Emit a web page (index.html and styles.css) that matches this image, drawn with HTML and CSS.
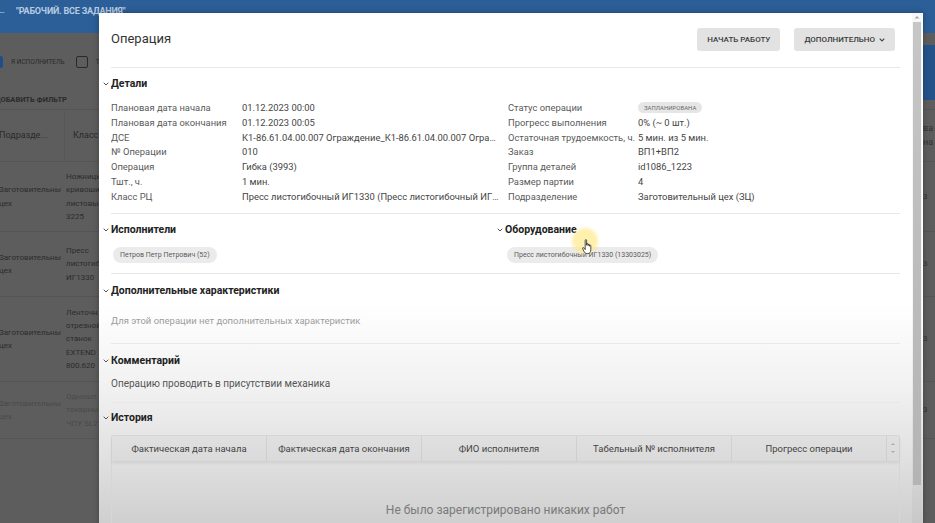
FILE: index.html
```html
<!DOCTYPE html>
<html lang="ru">
<head>
<meta charset="utf-8">
<title>Операция</title>
<link rel="stylesheet" href="styles.css">
</head>
<body>
<div class="app">
  <header class="appbar">
    <span class="back">←</span>
    <span class="apptitle">"РАБОЧИЙ. ВСЕ ЗАДАНИЯ"</span>
  </header>
  <div class="controls">
    <div class="controls-left">
      <div class="filters">
        <span class="cb cb-on"></span><span class="flabel">Я исполнитель</span>
        <span class="cb"></span><span class="flabel">Только мои</span>
      </div>
      <div class="addfilter">Добавить фильтр</div>
    </div>
    <div class="side-btn"></div>
  </div>
  <div class="bgtable">
    <div class="brow bhead"><span class="c1">Подразде...</span><span class="c2">Класс РЦ</span><span class="c3"></span><span class="c4">ва<br>на</span></div>
    <div class="brow"><span class="c1">Заготовительны<br>цех</span><span class="c2">Ножницы<br>кривошип<br>листовы<br>3225</span><span class="c3"></span><span class="c4">3</span></div>
    <div class="brow"><span class="c1">Заготовительны<br>цех</span><span class="c2">Пресс<br>листогиб<br>ИГ1330</span><span class="c3"></span><span class="c4">3</span></div>
    <div class="brow"><span class="c1">Заготовительны<br>цех</span><span class="c2">Ленточн<br>отрезной<br>станок<br>EXTEND<br>800.620</span><span class="c3"></span><span class="c4">3</span></div>
    <div class="brow faded"><span class="c1">Заготовительны<br>цех</span><span class="c2">Одношп<br>токарны<br>ЧПУ SL2</span><span class="c3"></span><span class="c4">3</span></div>
  </div>
</div>

<div class="modal">
  <div class="modal-body">
    <div class="mhead">
      <h1 class="mtitle">Операция</h1>
      <div class="mactions">
        <button class="btn">Начать работу</button>
        <button class="btn">Дополнительно <svg class="btn-chev" viewBox="0 0 6 4" width="6" height="4"><polyline points="0.7,0.7 3,3 5.3,0.7" fill="none" stroke="#444" stroke-width="1.1"/></svg></button>
      </div>
    </div>

    <section class="sec sec-details">
      <h2 class="sec-h"><svg class="chev" viewBox="0 0 6 4" width="6" height="4"><polyline points="0.7,0.7 3,3 5.3,0.7" fill="none" stroke="#555" stroke-width="1"/></svg>Детали</h2>
      <div class="kv">
        <span class="k">Плановая дата начала</span><span class="v">01.12.2023 00:00</span>
        <span class="k">Статус операции</span><span class="v"><span class="status">Запланирована</span></span>

        <span class="k">Плановая дата окончания</span><span class="v">01.12.2023 00:05</span>
        <span class="k">Прогресс выполнения</span><span class="v">0% (~ 0 шт.)</span>

        <span class="k">ДСЕ</span><span class="v">К1-86.61.04.00.007 Ограждение_К1-86.61.04.00.007 Ограждение</span>
        <span class="k">Остаточная трудоемкость, ч.</span><span class="v">5 мин. из 5 мин.</span>

        <span class="k">№ Операции</span><span class="v">010</span>
        <span class="k">Заказ</span><span class="v">ВП1+ВП2</span>

        <span class="k">Операция</span><span class="v">Гибка (3993)</span>
        <span class="k">Группа деталей</span><span class="v">id1086_1223</span>

        <span class="k">Тшт., ч.</span><span class="v">1 мин.</span>
        <span class="k">Размер партии</span><span class="v">4</span>

        <span class="k">Класс РЦ</span><span class="v">Пресс листогибочный ИГ1330 (Пресс листогибочный ИГ1330)</span>
        <span class="k">Подразделение</span><span class="v">Заготовительный цех (ЗЦ)</span>
      </div>
    </section>

    <section class="sec sec-split">
      <div class="half">
        <h2 class="sec-h"><svg class="chev" viewBox="0 0 6 4" width="6" height="4"><polyline points="0.7,0.7 3,3 5.3,0.7" fill="none" stroke="#555" stroke-width="1"/></svg>Исполнители</h2>
        <div class="chips"><span class="chip">Петров Петр Петрович (52)</span></div>
      </div>
      <div class="half">
        <h2 class="sec-h"><svg class="chev" viewBox="0 0 6 4" width="6" height="4"><polyline points="0.7,0.7 3,3 5.3,0.7" fill="none" stroke="#555" stroke-width="1"/></svg>Оборудование</h2>
        <div class="chips"><span class="chip">Пресс листогибочный ИГ1330 (13303025)</span></div>
      </div>
    </section>

    <section class="sec sec-extra">
      <h2 class="sec-h"><svg class="chev" viewBox="0 0 6 4" width="6" height="4"><polyline points="0.7,0.7 3,3 5.3,0.7" fill="none" stroke="#555" stroke-width="1"/></svg>Дополнительные характеристики</h2>
      <p class="muted">Для этой операции нет дополнительных характеристик</p>
    </section>

    <section class="sec sec-comment">
      <h2 class="sec-h"><svg class="chev" viewBox="0 0 6 4" width="6" height="4"><polyline points="0.7,0.7 3,3 5.3,0.7" fill="none" stroke="#555" stroke-width="1"/></svg>Комментарий</h2>
      <p class="text">Операцию проводить в присутствии механика</p>
    </section>

    <section class="sec sec-history">
      <h2 class="sec-h"><svg class="chev" viewBox="0 0 6 4" width="6" height="4"><polyline points="0.7,0.7 3,3 5.3,0.7" fill="none" stroke="#555" stroke-width="1"/></svg>История</h2>
      <div class="htable">
        <div class="hhead">
          <span class="hc">Фактическая дата начала</span>
          <span class="hc">Фактическая дата окончания</span>
          <span class="hc">ФИО исполнителя</span>
          <span class="hc">Табельный № исполнителя</span>
          <span class="hc">Прогресс операции</span>
          <span class="hscroll"><svg viewBox="0 0 6 14" width="6" height="14"><polygon points="1,4 3,2 5,4" fill="#aaa"/><polygon points="1,10 3,12 5,10" fill="#aaa"/></svg></span>
        </div>
        <div class="hbody">Не было зарегистрировано никаких работ</div>
      </div>
    </section>
  </div>
  <div class="mscroll">
    <svg class="sarrow" viewBox="0 0 6 4" width="6" height="4"><polygon points="0.5,3.5 3,1 5.5,3.5" fill="#a8a8a8"/></svg>
    <span class="sthumb"></span>
  </div>
</div>

<div class="cursor">
  <span class="halo"></span>
  <svg class="hand" viewBox="0 0 11 16" width="11" height="16"><path d="M3.2 1.3 C3.2 0.4 4.6 0.4 4.6 1.3 L4.6 6.2 L4.6 5.2 C4.6 4.4 6 4.4 6 5.2 L6 6.6 L6 5.8 C6 5 7.4 5 7.4 5.8 L7.4 7.2 L7.4 6.6 C7.4 5.9 8.8 5.9 8.8 6.6 L8.8 10.8 C8.8 13 7.8 14.6 5.8 14.6 L4.8 14.6 C3.4 14.6 2.8 13.8 2 12.4 L0.6 9.6 C0.2 8.8 1.2 8.2 1.8 8.9 L3.2 10.6 Z" fill="#fff" stroke="#222" stroke-width="0.8" stroke-linejoin="round"/></svg>
</div>
</body>
</html>
```

FILE: styles.css
```css
* { box-sizing: border-box; }

html, body {
  margin: 0;
  padding: 0;
}

body {
  width: 935px;
  height: 523px;
  overflow: hidden;
  position: relative;
  background: #5d5d5d;
  font-family: Roboto, "Noto Sans", "Liberation Sans", sans-serif;
}

/* ---------- background page (dimmed) ---------- */
.app {
  display: flex;
  flex-direction: column;
  width: 935px;
}

.appbar {
  height: 33px;
  background: #2c5e97;
  display: flex;
  align-items: flex-start;
  padding-top: 4px;
  gap: 9px;
  color: #b7cbe2;
}

.back {
  margin-left: -4px;
  font-size: 11px;
  line-height: 14px;
}

.apptitle {
  font-size: 9px;
  font-weight: 700;
  line-height: 14px;
  letter-spacing: -0.2px;
}

.controls {
  display: flex;
  height: 77px;
  border-bottom: 1px solid #555;
}

.controls-left {
  flex: 1;
  padding-top: 22px;
}

.filters {
  display: flex;
  align-items: center;
  height: 14px;
  margin-left: -9px;
  gap: 8px;
}

.cb {
  width: 12px;
  height: 12px;
  border: 1.5px solid #2a2a2a;
  border-radius: 2px;
}

.cb-on {
  background: #1f4f84;
  border-color: #1f4f84;
}

.flabel {
  font-size: 6.5px;
  text-transform: uppercase;
  color: #2b2b2b;
  margin-right: 3px;
}

.addfilter {
  margin-top: 24px;
  margin-left: -5px;
  font-size: 7.5px;
  line-height: 14px;
  font-weight: 700;
  text-transform: uppercase;
  color: #2b2b2b;
}

.side-btn {
  width: 12px;
  height: 55px;
  margin-top: 12px;
  background: #24538a;
}

.bgtable {
  display: grid;
  grid-template-rows: 52px 70px 65px 85px 57px;
  margin-left: -1px;
}

.brow {
  display: grid;
  grid-template-columns: 66px 58px 1fr 12px;
  align-items: center;
  border-bottom: 1px solid #555;
  font-size: 8px;
  line-height: 13.3px;
  color: #2c2c2c;
}

.brow .c2 { padding-left: 1px; }
.brow .c4 { color: #333; }

.bhead {
  font-size: 9px;
  color: #2a2a2a;
}

.bhead .c1 { border-right: 1px solid #585858; height: 100%; display: flex; align-items: center; }
.bhead .c2 { padding-left: 8px; }

.faded { color: #4a4a4a; }

/* ---------- modal ---------- */
.modal {
  position: absolute;
  left: 99px;
  top: 13px;
  width: 824px;
  height: 520px;
  display: flex;
  background: linear-gradient(180deg, #ffffff 0, #ffffff 290px, #f1f1f1 375px, #e2e2e2 440px, #cfcfcf 510px);
  box-shadow: 0 0 6px rgba(0, 0, 0, 0.3);
}

.modal-body {
  flex: 1;
  padding: 0 12px;
  min-width: 0;
}

.mhead {
  height: 55px;
  padding-bottom: 3px;
  display: flex;
  align-items: center;
  justify-content: space-between;
  border-bottom: 1px solid #e8e8e8;
}

.mtitle {
  margin: 0;
  font-size: 13px;
  font-weight: 400;
  color: #333;
}

.mactions {
  display: flex;
  gap: 14px;
  margin-right: 5px;
  margin-top: 2px;
}

.btn {
  height: 23px;
  border: 0;
  border-radius: 3px;
  background: #e2e2e2;
  color: #3a3a3a;
  font-family: inherit;
  font-size: 8px;
  font-weight: 500;
  text-transform: uppercase;
  padding: 0 10px;
  display: flex;
  align-items: center;
  gap: 4px;
}

.btn-chev { display: block; }

.sec {
  border-bottom: 1px solid #e8e8e8;
}

.sec-h {
  margin: 9px 0 0;
  display: flex;
  align-items: center;
  gap: 2px;
  margin-left: -8px;
  font-size: 10.5px;
  line-height: 14px;
  font-weight: 700;
  color: #222;
}

.chev { display: block; }

/* details */
.kv {
  margin-top: 10px;
  padding-bottom: 8px;
  display: grid;
  grid-template-columns: 131px 266px 130px 1fr;
  font-size: 9.4px;
  line-height: 14.8px;
}

.k { color: #5a5a5a; white-space: nowrap; overflow: hidden; }
.v {
  color: #444;
  white-space: nowrap;
  overflow: hidden;
  text-overflow: ellipsis;
  padding-right: 8px;
}

.status {
  display: inline-block;
  height: 11px;
  line-height: 11px;
  padding: 0 6px;
  border-radius: 6px;
  background: #e6e6e6;
  color: #6a6a6a;
  font-size: 6px;
  text-transform: uppercase;
  vertical-align: 1px;
}

/* executors / equipment */
.sec-split {
  display: grid;
  grid-template-columns: 394px 1fr;
  padding-bottom: 10px;
}

.chips {
  margin-top: 10px;
  display: flex;
}

.chip {
  height: 16px;
  line-height: 16px;
  padding: 0 7px;
  margin-left: 2px;
  border-radius: 8px;
  background: #ebebeb;
  color: #5a5a5a;
  font-size: 7px;
}

/* extra / comment */
.sec-extra .sec-h { margin-top: 10px; }

.muted {
  margin: 16px 0 0;
  padding-bottom: 15px;
  font-size: 9.5px;
  line-height: 14px;
  color: #9c9c9c;
}

.sec-comment .sec-h { margin-top: 10px; }

.text {
  margin: 9px 0 0;
  padding-bottom: 11px;
  font-size: 10px;
  line-height: 14px;
  color: #555;
}

/* history */
.sec-history { border-bottom: 0; }
.sec-history .sec-h { margin-top: 8px; }

.htable {
  margin-top: 10px;
  border: 1px solid #d6d6d6;
  border-radius: 2px;
}

.hhead {
  display: grid;
  grid-template-columns: repeat(5, 155px) 1fr;
  height: 25px;
  background: rgba(0, 0, 0, 0.025);
  box-shadow: 0 2px 3px rgba(0, 0, 0, 0.08);
}

.hc {
  display: flex;
  align-items: center;
  justify-content: center;
  font-size: 9.5px;
  color: #444;
  border-right: 1px solid rgba(0, 0, 0, 0.06);
  white-space: nowrap;
}

.hscroll {
  display: flex;
  align-items: center;
  justify-content: center;
}

.hscroll svg { display: block; }

.hbody {
  padding-top: 42px;
  height: 120px;
  text-align: center;
  font-size: 12px;
  line-height: 14px;
  color: #7a7a7a;
}

/* modal scrollbar */
.mscroll {
  width: 10px;
  margin-right: 1px;
  display: flex;
  flex-direction: column;
  align-items: center;
  background: rgba(0, 0, 0, 0.03);
}

.sarrow {
  display: block;
  margin-top: 2px;
}

.sthumb {
  display: block;
  width: 8px;
  height: 463px;
  margin-top: 3px;
  background: linear-gradient(180deg, #c6c6c6, #b4b4b4);
}

/* mouse cursor highlight */
.cursor {
  position: absolute;
  left: 572px;
  top: 228px;
  width: 28px;
  height: 30px;
}

.halo {
  position: absolute;
  left: 0;
  top: 0;
  width: 26px;
  height: 26px;
  border-radius: 50%;
  background: rgba(255, 232, 130, 0.65);
  filter: blur(1.5px);
}

.hand {
  position: absolute;
  left: 10px;
  top: 11px;
}
```
